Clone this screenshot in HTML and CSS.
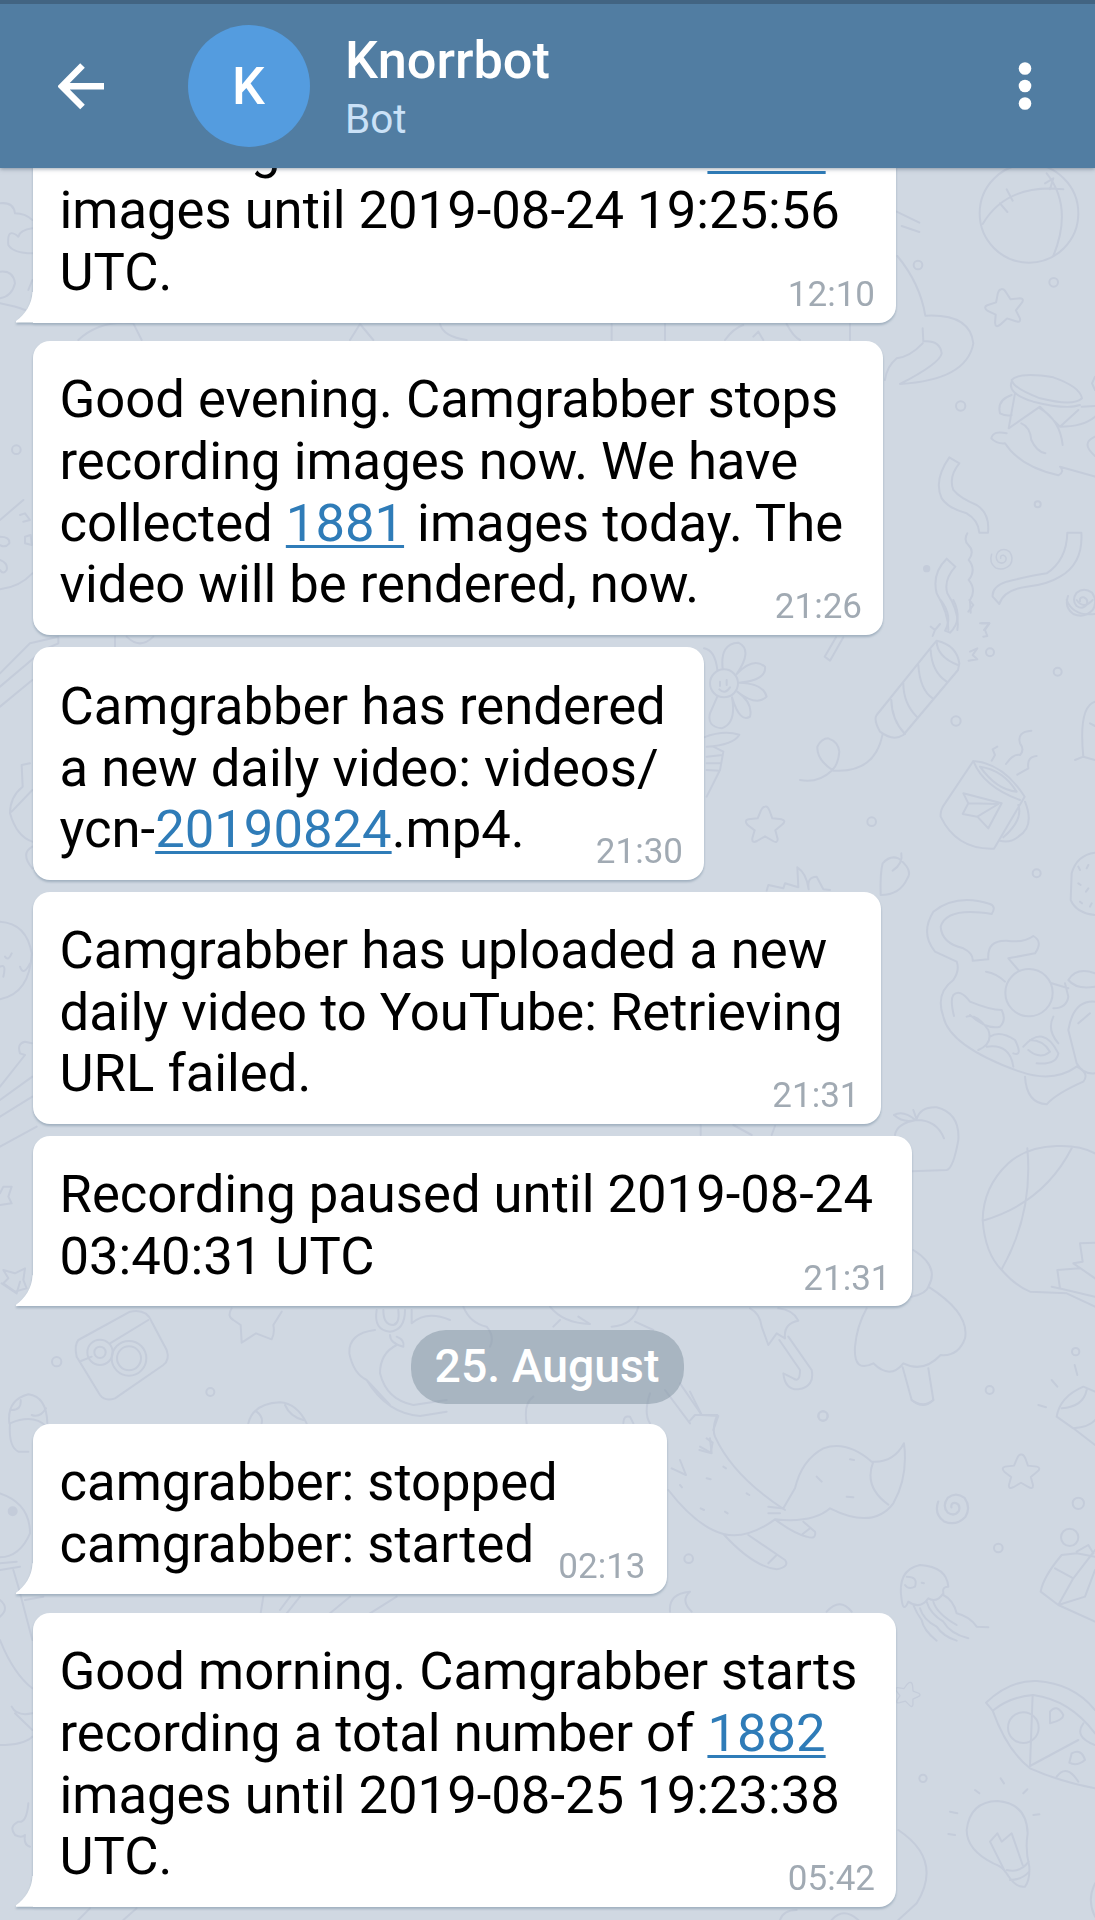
FILE: index.html
```html
<!DOCTYPE html>
<html lang="en">
<head>
<meta charset="utf-8">
<title>Knorrbot</title>
<link rel="stylesheet" href="styles.css">
</head>
<body>
<div class="app">
  <header class="header">
    <svg class="back" width="48" height="48" viewBox="0 0 48 48"><path d="M46 24.300H5M24.500 3.500L4 24.300L24.500 45"/></svg>
    <div class="avatar">K</div>
    <div class="who">
      <div class="name">Knorrbot</div>
      <div class="status">Bot</div>
    </div>
    <svg class="more" width="14" height="50" viewBox="0 0 14 50"><circle cx="7" cy="7.500" r="6.300"/><circle cx="7" cy="25" r="6.300"/><circle cx="7" cy="42.500" r="6.300"/></svg>
  </header>

  <main class="chat">
    <svg class="wallpaper" width="1095" height="1920" viewBox="0 0 1095 1920">
      <defs>
        <path id="star" d="M0-55Q8-58 14-42L22-20L50-17Q66-12 50 0L31 16L38 42Q38 56 24 48L0 34L-24 48Q-40 56-38 40L-31 16L-52 0Q-64-14-50-17L-22-20L-12-44Q-6-56 0-55Z"/>
        <path id="spiral" d="M-8 4Q-10-10 4-8Q18-2 12 14Q0 30-18 18Q-34 0-18-22Q4-40 28-22Q46 4 30 30Q4 56-28 42Q-56 22-44-12"/>
      </defs>

      <!-- top right: ball, elephant, jar, streamers -->
      <g transform="translate(860 150) scale(.33333)">
        <ellipse cx="507" cy="190" rx="148" ry="148"/>
        <path d="M368 222Q440 100 610 118M560 70Q640 170 580 318M440 118L458 152M420 160L442 186M555 100L580 85L570 118M110 185L178 218M125 228L178 246M112 318Q180 400 196 497Q330 490 340 580Q320 690 120 702Q240 640 245 610Q240 570 190 574L188 535M188 580Q150 620 110 625Q80 650 75 690"/>
        <use href="#star" transform="translate(434 472) rotate(-12)"/>
        <circle cx="174" cy="345" r="13"/><circle cx="581" cy="397" r="13"/><circle cx="302" cy="768" r="14"/><circle cx="533" cy="1063" r="9"/><circle class="dot" cx="200" cy="1256" r="8"/>
        <path d="M455 690Q480 665 580 682Q660 710 666 745Q640 770 540 745Q460 715 455 690ZM455 695Q440 730 520 755Q620 780 660 765M465 730L446 835L540 770L600 830L655 780M455 735Q410 750 420 790Q440 800 455 795M484 820Q510 830 514 870Q530 905 556 910M540 775Q600 810 608 885M440 850Q400 840 394 865Q410 882 435 880Q480 950 595 976Q615 965 600 950L705 980M600 830Q670 830 705 800M665 770L705 768M705 860Q660 880 705 918M705 680L696 700L705 720"/>
        <path d="M298 940L268 922Q220 990 245 1045Q265 1075 320 1090Q355 1110 358 1148L384 1148Q390 1090 350 1065Q300 1045 280 1020Q265 980 298 940ZM322 1150Q310 1170 325 1185Q345 1205 326 1230Q350 1260 326 1290Q350 1320 330 1350L332 1388M622 1148L664 1148Q670 1240 600 1280Q560 1305 500 1310Q430 1320 418 1362L398 1340Q395 1310 440 1295Q520 1275 560 1270Q620 1230 622 1148ZM286 1250L260 1226Q215 1270 230 1330Q265 1390 265 1440M286 1250Q250 1290 262 1330Q300 1390 292 1440M360 1420L388 1420L372 1440"/>
        <use href="#spiral" transform="translate(428 1222) scale(.75)"/><use href="#spiral" transform="translate(668 1350)"/>
      </g>

      <!-- middle right: flower, firecracker, mug, cat -->
      <g transform="translate(690 600) scale(.33333)">
        <circle cx="102" cy="250" r="42"/><path d="M90 245V258M110 240V255M88 268Q105 285 120 262M98 206Q90 130 145 128Q190 150 140 222Q190 170 225 200Q230 240 148 248Q220 250 230 290Q200 320 142 275Q190 310 180 350Q150 370 126 292Q140 370 95 385Q50 380 60 340L82 290M42 145Q75 150 82 210M42 412Q100 390 148 404Q130 435 50 440M70 440L100 455L90 510L50 590M50 470L98 465M50 490L94 490M50 510L88 512"/>
        <path d="M438 112L404 170L420 182L460 112M752 0Q790 50 765 92L780 98Q820 60 790 0M838 0L850 15L835 35M875 70L898 70L885 90L892 108L880 110M722 80L735 90L750 72M735 90L728 108M840 155L862 145L848 165L862 178L836 182"/>
        <path d="M740 122Q800 135 808 190L804 210L640 405Q610 425 570 395Q550 360 560 345L725 140ZM740 122Q740 170 804 195M722 150Q725 215 770 245M685 195Q690 270 728 295M640 250Q640 310 680 350M604 300Q605 360 645 402M578 402Q555 520 430 512Q380 480 382 440Q395 415 415 415Q445 425 448 455Q445 495 425 512Q385 550 330 540"/>
        <use href="#star" transform="translate(225 675)"/>
        <circle cx="545" cy="665" r="13"/><circle cx="798" cy="363" r="14"/><circle cx="900" cy="157" r="12"/><circle cx="1103" cy="215" r="12"/><circle cx="1040" cy="820" r="12"/><path d="M1130 0Q1150 50 1215 42M1160 0Q1180 30 1208 0M1215 305Q1165 320 1180 470M1200 370L1215 378M1155 480L1180 470L1215 480"/>
        <path d="M850 483Q940 490 1004 590L912 746Q800 750 752 650Q750 630 765 610ZM850 483Q880 560 990 600M870 500Q940 510 980 575Q920 570 870 500M985 615Q1000 660 940 712M1005 605Q1035 680 985 710Q960 730 930 722M820 580L935 610L895 685L862 650L818 642L835 610ZM835 610L925 612L862 650M905 482L915 465L908 448L922 440M948 492Q970 460 990 465Q1005 450 990 430Q980 395 1024 392M982 524L1015 505Q1010 470 1040 468"/>
        <path d="M230 872L235 855L280 865L285 850L325 862L322 802Q350 820 356 868Q350 830 380 830L400 868L420 870M572 885Q570 820 578 790Q600 765 625 775Q670 810 652 835Q630 885 572 885M634 760Q640 790 608 812"/>
        <path d="M1215 758Q1160 765 1145 820L1142 900Q1160 940 1215 945M1165 800L1170 810M1195 795L1190 805M1165 850L1172 855M1195 865L1188 875M1170 905L1176 910M1205 910L1200 920"/>
        <path d="M905 942Q920 920 900 912Q800 880 730 935Q690 1000 735 1055L800 1085Q810 1110 790 1140Q735 1180 760 1250Q780 1340 990 1415Q1090 1450 1160 1400M905 942Q770 920 752 980Q755 1030 820 1045Q850 1060 848 1082L895 1078Q890 1020 950 1022Q1000 1030 1030 1008Q1060 1025 1035 1060L955 1075L985 1110M888 1115Q920 1120 945 1145"/>
        <circle cx="1017" cy="1178" r="71"/>
        <path d="M792 1248Q780 1200 790 1185Q810 1165 840 1205Q900 1230 935 1230Q950 1260 930 1280Q890 1290 840 1245M865 1350Q910 1330 895 1290Q860 1240 830 1250M900 1310Q930 1290 975 1320Q1000 1370 970 1360M890 1340Q960 1330 970 1400M1000 1340Q1060 1270 1105 1360Q1100 1395 1040 1390M1020 1320Q1060 1320 1080 1355Q1050 1380 1015 1350M1085 1150L1135 1165M1090 1225Q1130 1225 1135 1190L1125 1150M1215 1120Q1160 1100 1135 1140Q1160 1170 1215 1160M1215 1205Q1150 1200 1135 1290L1160 1390Q1180 1425 1215 1420M1090 1250Q1070 1290 1105 1330M1165 1270L1200 1240M1160 1400Q1200 1420 1180 1445Q1100 1480 1070 1513Q1010 1510 1005 1430"/>
      </g>

      <!-- peach, basketball, tree, umbrella, fox -->
      <g transform="translate(690 1080) scale(.33333)">
        <path d="M615 165Q620 130 680 120Q740 120 762 175M612 105Q640 90 676 120Q640 130 612 105M670 90L680 118Q690 80 740 82Q810 100 805 180Q790 265 770 270L665 274M32 135V165M130 135L185 165M255 138L245 165"/>
        <path d="M1215 220Q1170 195 1100 198Q1010 200 955 250Q880 320 878 420Q885 520 935 570Q980 620 1020 635L1130 640L1215 680M878 422Q1060 370 1145 205M1012 205Q1030 400 935 568M1215 488L1170 490L1178 545L1150 550L1215 595M1110 625L1102 570L1170 565M1085 620L1120 628L1215 650"/>
        <path d="M670 510Q750 560 715 620Q840 700 825 775Q805 830 752 825Q700 880 640 850Q600 900 550 850Q490 880 495 800Q500 740 530 685M665 650Q710 640 715 620M638 862L665 960Q700 985 730 960L715 865"/>
        <path d="M180 685Q210 700 215 740L235 795L260 760L285 775Q280 730 325 722Q310 690 265 685M268 780L330 870Q330 910 310 895L280 880Q285 930 325 928Q375 920 365 870L295 770"/>
        <circle cx="399" cy="1008" r="14"/><circle cx="899" cy="930" r="12"/><circle cx="1157" cy="815" r="11"/>
        <path d="M1085 900L1102 920M1154 855L1162 885M1045 975L1068 982M1100 1010Q1110 950 1180 920L1215 935M1100 1010L1150 1045L1215 1095M1115 985Q1180 980 1190 930M1150 1045Q1200 1040 1215 1020"/>
        <path d="M0 935L35 1005M0 1022L15 1005H82Q65 1045 75 1070Q130 1190 285 1290M30 1100L62 1118L68 1088L50 1075"/>
      </g>
      <g transform="translate(660 1400) scale(.33333)">
        <path d="M25 270Q110 380 190 402Q260 420 345 358Q460 370 510 325Q640 390 700 310Q745 230 732 130Q700 190 635 185Q560 120 490 145Q425 180 405 265L370 325M640 185Q610 260 685 314M190 402Q280 500 350 508Q390 500 375 480L265 405M325 490L350 465M345 358Q400 400 440 410Q470 420 465 395L430 365M428 402L450 385M325 320L365 325M325 340L360 340M60 180L78 225L35 205M118 150L155 160L150 115"/>
        <path d="M570 178L582 180M470 230L485 245M560 290L580 292M190 200L198 205M140 235L152 238M260 280L268 285M122 325L132 330M195 335L203 340M60 255L66 262"/>
        <circle cx="489" cy="48" r="14"/><circle cx="86" cy="476" r="13"/><circle cx="1015" cy="444" r="13"/><circle cx="1255" cy="310" r="17"/><circle cx="789" cy="1135" r="11"/><circle cx="1229" cy="412" r="26"/>
        <path d="M755 0Q790 30 820 0"/>
        <use href="#star" transform="translate(1083 216) scale(.95)"/>
        <use href="#spiral" transform="translate(883 318) scale(1.1)"/>
        <path d="M725 600Q710 510 780 495Q860 500 865 560Q845 560 850 580Q830 610 805 595Q780 630 745 605Q730 640 725 600ZM740 530Q775 530 765 560Q745 570 735 555M785 548L792 550M760 615Q770 640 785 660Q790 690 830 722M780 625Q790 660 830 680Q850 710 890 722M800 605Q810 640 850 665Q870 700 925 715M820 605Q830 640 890 675M850 585Q880 600 890 640Q930 650 950 680L985 682"/>
        <path d="M1305 470L1250 460L1205 465Q1150 530 1142 575L1195 615L1275 590L1305 510M1185 505L1240 535L1305 450M1240 535L1195 615L1305 665M1250 455L1285 435L1300 460M30 635Q25 580 90 575Q60 600 95 635M500 635Q540 590 575 635"/>
        <use href="#star" transform="translate(742 882) rotate(15) scale(.65)"/>
        <path d="M978 908Q1050 840 1130 843Q1240 850 1305 930M978 908L998 932Q1050 890 1120 885Q1230 900 1305 1000M998 932Q1040 1050 1110 1105Q1200 1145 1305 1165M1118 885L1110 1098L1255 1020M1170 935Q1190 910 1210 945Q1210 960 1170 970ZM1235 1060Q1265 1045 1275 1080Q1250 1100 1228 1088ZM1190 1130Q1220 1090 1255 1145M1270 970Q1240 1010 1305 1035"/><circle cx="1090" cy="983" r="46"/>
        <path d="M1045 1428Q1030 1400 1000 1390Q920 1350 920 1290Q930 1205 1012 1203Q1100 1210 1103 1300Q1095 1350 1108 1400Q1110 1440 1095 1460Q1070 1465 1045 1428ZM1040 1410Q1080 1420 1106 1385M1050 1440Q1085 1440 1108 1415M1035 1415L990 1325L1012 1300L1025 1325L1055 1300L1088 1395M1022 1135L1032 1150M945 1170L958 1180M1090 1180L1102 1168M870 1235L892 1240M1120 1245L1138 1243M865 1302L885 1305M715 1290Q850 1380 770 1510L715 1560M360 1560Q370 1530 410 1530M515 1560Q550 1520 595 1560M1305 1450Q1280 1500 1305 1550"/>
      </g>

      <!-- camera, rocket and other drawings on the left -->
      <g transform="translate(0 1280) scale(.33333)">
        <path d="M235 180L390 95Q440 85 455 125L500 210Q510 240 490 255L345 355Q315 365 300 345L230 230Q222 195 235 180ZM243 243L275 230M330 190L445 120"/><circle cx="300" cy="217" r="38"/><circle cx="300" cy="217" r="17"/><circle cx="387" cy="235" r="52"/><circle cx="387" cy="235" r="36"/><circle cx="170" cy="245" r="14"/><circle cx="631" cy="336" r="12"/>
        <path d="M695 85Q680 110 700 120L722 135L725 188L768 160L815 178Q825 160 820 135L845 95"/>
        <path d="M28 430Q20 360 85 343Q140 350 142 430M30 430Q100 400 140 440M35 390Q65 390 62 360M95 405Q120 415 138 385M30 430Q25 500 55 515H85M745 430Q760 370 840 367Q890 370 920 430M855 375Q870 410 910 420M770 395Q790 410 785 430M5 10L50 40L60 5"/>
        <path d="M1125 150Q1045 160 1048 220Q1060 280 1100 300Q1160 400 1260 408L1340 395M1190 195Q1140 220 1140 280Q1160 360 1240 375L1340 360M1130 90Q1120 150 1170 155Q1215 150 1215 90M1150 90Q1150 135 1180 135Q1200 130 1195 90M1170 165Q1170 190 1210 200Q1215 180 1190 170M1235 90V130Q1280 90 1350 120M1100 300L1170 375"/>
        <path d="M0 640Q90 670 90 760Q60 830 0 832M0 850L50 845M0 870L60 860M40 870L55 920L97 1080M75 960L130 950M0 960Q30 985 0 1010M790 950L782 1000M870 950L840 990M900 950L860 1000M1050 950L990 1000M1190 950L1110 1000"/><circle class="dot" cx="38" cy="694" r="12"/>
      </g>
      <g transform="translate(340 1300) scale(.33333)"><path d="M370 20Q390 70 440 80Q465 110 450 140M630 20Q670 70 750 72L715 50M640 80L660 60M895 20Q880 75 815 80M885 65L940 90M580 290Q550 310 560 370M850 370Q850 345 870 350L880 370M930 280Q910 340 930 370M1020 250L1085 345M975 270L1050 370M1085 345L1135 348L1120 390"/></g>
      <g transform="translate(0 1440) scale(.33333)"><path d="M0 600Q40 700 97 745M35 800Q50 830 97 820M45 820L97 870M0 915Q70 915 97 890M85 1090Q80 1150 55 1145Q25 1160 45 1185Q65 1195 75 1185Q70 1215 90 1220M235 1440L270 1405M370 1440L410 1405"/></g>
      <g transform="translate(0 500) scale(.33333)"><path d="M0 60L70 0M60 45L75 40L90 60L70 65M75 110L92 105L95 135L75 130ZM0 110Q30 110 28 130Q15 145 0 135M0 180Q25 190 20 210Q10 225 0 210M0 268Q60 260 97 220M0 520L90 430L175 410V430L130 450L0 560M0 620L97 540M90 790L65 795L68 860Q30 890 30 940Q50 1010 97 1025M35 935L97 870M97 1040Q60 1060 97 1105M345 410V440M380 410Q420 450 460 410"/><circle cx="49" cy="-151" r="13"/></g>
      <g transform="translate(0 860) scale(.33333)"><path d="M0 185Q80 190 95 280Q90 400 0 418M0 320Q20 310 10 350M60 320Q70 350 90 310M15 290Q25 305 35 280M95 550L75 545Q50 550 60 580L75 585L0 680M97 650L0 720M97 710L0 770M0 860L110 800M0 1000L10 980H35L25 1010L35 1030L0 1035M10 1230L45 1240L75 1225L70 1260L80 1285L45 1295L10 1270L25 1255Z"/></g>
      <g transform="scale(.33333)"><path d="M0 610Q40 605 45 640Q75 640 97 660M97 685Q60 690 55 710Q20 680 25 735Q40 760 97 760M0 815Q40 810 45 850Q35 890 0 895M85 870L97 840M0 910Q50 920 75 930M235 1020Q300 960 400 970L425 1020M1050 1020L1080 972L1120 1020M1320 972Q1330 1010 1400 1020M1835 972V1020M1995 972V1020M2175 1020Q2200 985 2230 975M2260 1010L2275 995L2290 1020M2360 972Q2380 1010 2400 1020M2550 972V1020"/></g>
    </svg>

    <article class="bubble tail b1">
      <p>recording a total number of <a>1880</a><br>images until 2019-08-24 19:25:56<br>UTC.</p><time>12:10</time>
    </article>
    <article class="bubble b2">
      <p>Good evening. Camgrabber stops<br>recording images now. We have<br>collected <a>1881</a> images today. The<br>video will be rendered, now.</p><time>21:26</time>
    </article>
    <article class="bubble b3">
      <p>Camgrabber has rendered<br>a new daily video: videos/<br>ycn-<a>20190824</a>.mp4.</p><time>21:30</time>
    </article>
    <article class="bubble b4">
      <p>Camgrabber has uploaded a new<br>daily video to YouTube: Retrieving<br>URL failed.</p><time>21:31</time>
    </article>
    <article class="bubble tail b5">
      <p>Recording paused until 2019-08-24<br>03:40:31 UTC</p><time>21:31</time>
    </article>
    <div class="date">25. August</div>
    <article class="bubble tail b6">
      <p>camgrabber: stopped<br>camgrabber: started</p><time>02:13</time>
    </article>
    <article class="bubble tail b7">
      <p>Good morning. Camgrabber starts<br>recording a total number of <a>1882</a><br>images until 2019-08-25 19:23:38<br>UTC.</p><time>05:42</time>
    </article>
  </main>
</div>
</body>
</html>
```
FILE: styles.css
```css
* { box-sizing: border-box; }
body {
  margin: 0;
  font-family: Roboto, "Liberation Sans", sans-serif;
  color: #000;
}
.app {
  width: 1095px;
  height: 1920px;
  display: flex;
  flex-direction: column;
  overflow: hidden;
  position: relative;
}
.header {
  flex: none;
  height: 168px;
  padding: 0 63px 0 58px;
  display: flex;
  align-items: center;
  background: #517da2;
  border-top: 4px solid #426482;
  box-shadow: 0 1px 4px rgba(60, 80, 100, .5);
  position: relative;
  z-index: 2;
}
.back {
  fill: none;
  stroke: #fff;
  stroke-width: 6.5;
}
.avatar {
  width: 122px;
  height: 122px;
  margin-left: 81.500px;
  border-radius: 50%;
  background: #549cdf;
  color: #fff;
  font-size: 52px;
  font-weight: 500;
  line-height: 123px;
  text-align: center;
}
.who {
  flex: 1;
  margin-left: 35.500px;
}
.name {
  color: #fff;
  font-size: 52.300px;
  font-weight: 500;
  line-height: 60px;
}
.status {
  color: #cae1f7;
  font-size: 40.500px;
  line-height: 48px;
  margin-top: 5px;
}
.more { fill: #fff; }

.chat {
  flex: 1;
  min-height: 0;
  overflow: hidden;
  padding: 0 0 13.300px 32.500px;
  display: flex;
  flex-direction: column;
  align-items: flex-start;
  justify-content: flex-end;
  background: #d0d8e2;
}
.wallpaper {
  position: absolute;
  left: 0;
  top: 0;
  fill: none;
  stroke: #c4ccda;
  stroke-width: 6;
  stroke-linecap: round;
  stroke-linejoin: round;
}
.dot { fill: #c4ccda; }

.bubble {
  flex: none;
  position: relative;
  display: flex;
  justify-content: space-between;
  align-items: flex-end;
  padding: 28.400px 21px 18.700px 27px;
  border-radius: 17px;
  background: #fff;
  filter: drop-shadow(0 2px 1px rgba(120, 142, 162, .55));
}
.bubble p {
  margin: 0;
  font-size: 52.600px;
  line-height: 61.700px;
  white-space: nowrap;
}
.bubble a {
  color: #2f7cb8;
  text-decoration: underline;
  text-decoration-thickness: 2.700px;
  text-underline-offset: 4px;
  text-decoration-skip-ink: none;
}
.bubble time {
  width: 0;
  display: flex;
  justify-content: flex-end;
  color: #a1aab3;
  font-size: 35px;
  line-height: 40px;
  margin-bottom: -11px;
}
.tail { border-bottom-left-radius: 0; }
.tail::before {
  content: "";
  position: absolute;
  left: -16.500px;
  bottom: 0;
  width: 17px;
  height: 31px;
  background: #fff;
  clip-path: path("M17 0H16.500C16 13 9 23 0 29.500V31H17Z");
}
.b1 { width: 863.500px; margin-bottom: 18.200px; }
.b2 { width: 850.500px; margin-bottom: 12.800px; }
.b3 { width: 671.500px; margin-bottom: 12.100px; }
.b4 { width: 848px; margin-bottom: 12px; }
.b5 { width: 879px; margin-bottom: 23.700px; }
.b6 { width: 634px; margin-bottom: 18.600px; }
.b7 { width: 863.500px; }

/* The first bubble is scrolled partly under the header. */
.b1 { border-top-left-radius: 0; border-top-right-radius: 0; }

.date {
  flex: none;
  position: relative;
  width: 273px;
  height: 73.500px;
  margin: 0 0 20.200px 378px;
  border-radius: 35px;
  background: rgba(128, 146, 160, .5);
  color: #fff;
  font-size: 46.400px;
  font-weight: 500;
  line-height: 73.500px;
  text-align: center;
}
```
